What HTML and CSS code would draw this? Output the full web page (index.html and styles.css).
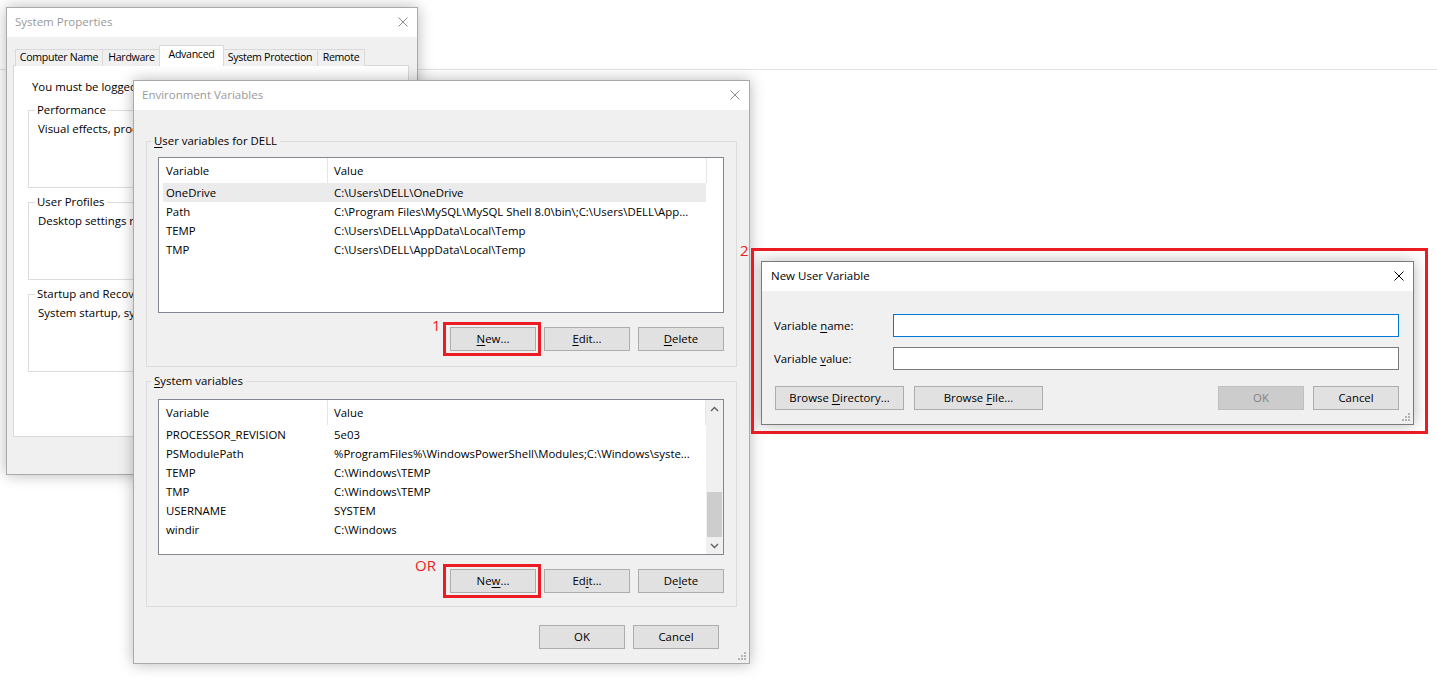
FILE: index.html
```html
<!DOCTYPE html>
<html lang="en">
<head>
    <meta charset="UTF-8">
    <title>Environment Variables</title>
    <link rel="stylesheet" href="styles.css">
</head>
<body>

<div class="desk">
    <div class="rule"></div>

    <!-- System Properties (behind) -->
    <div class="win floating sysprops">
        <div class="titlebar">
            <span class="title">System Properties</span>
            <svg class="x" width="10" height="10" viewBox="0 0 10 10"><path d="M0.5 0.5L9.5 9.5M9.5 0.5L0.5 9.5" stroke="currentColor" stroke-width="1"/></svg>
        </div>
        <div class="sp-body">
            <div class="tabs">
                <span class="tab t-name">Computer Name</span>
                <span class="tab t-hw">Hardware</span>
                <span class="tab t-adv active">Advanced</span>
                <span class="tab t-prot">System Protection</span>
                <span class="tab t-rem">Remote</span>
            </div>
            <div class="tabpanel">
                <p class="note">You must be logged on as an Administrator to make most of these changes.</p>
                <fieldset class="sp-group">
                    <legend>Performance</legend>
                    <p>Visual effects, processor scheduling, memory usage, and virtual memory</p>
                </fieldset>
                <fieldset class="sp-group">
                    <legend>User Profiles</legend>
                    <p>Desktop settings related to your sign-in</p>
                </fieldset>
                <fieldset class="sp-group">
                    <legend>Startup and Recovery</legend>
                    <p>System startup, system failure, and debugging information</p>
                </fieldset>
            </div>
        </div>
    </div>

    <!-- Environment Variables -->
    <div class="win floating envvars">
        <div class="titlebar">
            <span class="title">Environment Variables</span>
            <svg class="x" width="10" height="10" viewBox="0 0 10 10"><path d="M0.5 0.5L9.5 9.5M9.5 0.5L0.5 9.5" stroke="currentColor" stroke-width="1"/></svg>
        </div>
        <div class="env-body">
            <fieldset class="group g-user">
                <legend><u>U</u>ser variables for DELL</legend>
                <div class="listview">
                    <div class="lv-main">
                        <div class="lv-head"><span class="c1">Variable</span><span class="c2">Value</span></div>
                        <div class="lv-row sel"><span class="c1">OneDrive</span><span class="c2">C:\Users\DELL\OneDrive</span></div>
                        <div class="lv-row"><span class="c1">Path</span><span class="c2">C:\Program Files\MySQL\MySQL Shell 8.0\bin\;C:\Users\DELL\App...</span></div>
                        <div class="lv-row"><span class="c1">TEMP</span><span class="c2">C:\Users\DELL\AppData\Local\Temp</span></div>
                        <div class="lv-row"><span class="c1">TMP</span><span class="c2">C:\Users\DELL\AppData\Local\Temp</span></div>
                    </div>
                </div>
                <div class="btnrow">
                    <span class="callbtn">
                        <span class="mark m-one">1</span>
                        <button class="btn"><u>N</u>ew...</button>
                    </span>
                    <button class="btn"><u>E</u>dit...</button>
                    <button class="btn"><u>D</u>elete</button>
                </div>
            </fieldset>

            <fieldset class="group g-sys">
                <legend><u>S</u>ystem variables</legend>
                <div class="listview">
                    <div class="lv-main">
                        <div class="lv-head"><span class="c1">Variable</span><span class="c2">Value</span></div>
                        <div class="lv-row"><span class="c1">PROCESSOR_REVISION</span><span class="c2">5e03</span></div>
                        <div class="lv-row"><span class="c1">PSModulePath</span><span class="c2">%ProgramFiles%\WindowsPowerShell\Modules;C:\Windows\syste...</span></div>
                        <div class="lv-row"><span class="c1">TEMP</span><span class="c2">C:\Windows\TEMP</span></div>
                        <div class="lv-row"><span class="c1">TMP</span><span class="c2">C:\Windows\TEMP</span></div>
                        <div class="lv-row"><span class="c1">USERNAME</span><span class="c2">SYSTEM</span></div>
                        <div class="lv-row"><span class="c1">windir</span><span class="c2">C:\Windows</span></div>
                    </div>
                    <div class="lv-scroll">
                        <span class="sb-arrow"><svg width="9" height="6" viewBox="0 0 9 6"><path d="M1 5L4.5 1.5L8 5" fill="none" stroke="#606060" stroke-width="1.4"/></svg></span>
                        <span class="sb-track"><span class="sb-thumb"></span></span>
                        <span class="sb-arrow"><svg width="9" height="6" viewBox="0 0 9 6"><path d="M1 1L4.5 4.5L8 1" fill="none" stroke="#606060" stroke-width="1.4"/></svg></span>
                    </div>
                </div>
                <div class="btnrow">
                    <span class="callbtn">
                        <span class="mark m-or">OR</span>
                        <button class="btn">Ne<u>w</u>...</button>
                    </span>
                    <button class="btn">Ed<u>i</u>t...</button>
                    <button class="btn">De<u>l</u>ete</button>
                </div>
            </fieldset>

            <div class="dlg-actions">
                <button class="btn">OK</button>
                <button class="btn">Cancel</button>
            </div>
        </div>
        <svg class="grip" width="8" height="8" viewBox="0 0 8 8"><g fill="#b4b4b4"><rect x="6" y="0" width="2" height="2"/><rect x="3" y="3" width="2" height="2"/><rect x="6" y="3" width="2" height="2"/><rect x="0" y="6" width="2" height="2"/><rect x="3" y="6" width="2" height="2"/><rect x="6" y="6" width="2" height="2"/></g></svg>
    </div>

    <!-- New User Variable, framed in red -->
    <div class="callout">
        <span class="mark m-two">2</span>
        <div class="win newvar">
            <div class="titlebar">
                <span class="title">New User Variable</span>
                <svg class="x" width="10" height="10" viewBox="0 0 10 10"><path d="M0.5 0.5L9.5 9.5M9.5 0.5L0.5 9.5" stroke="currentColor" stroke-width="1"/></svg>
            </div>
            <div class="nv-body">
                <div class="nv-field">
                    <label for="varName">Variable <u>n</u>ame:</label>
                    <input type="text" id="varName" class="nv-input focus">
                </div>
                <div class="nv-field">
                    <label for="varValue">Variable <u>v</u>alue:</label>
                    <input type="text" id="varValue" class="nv-input">
                </div>
                <div class="nv-buttons">
                    <button class="btn wide">Browse <u>D</u>irectory...</button>
                    <button class="btn wide">Browse <u>F</u>ile...</button>
                    <span class="spacer"></span>
                    <button class="btn" disabled>OK</button>
                    <button class="btn">Cancel</button>
                </div>
            </div>
            <svg class="grip" width="8" height="8" viewBox="0 0 8 8"><g fill="#b4b4b4"><rect x="6" y="0" width="2" height="2"/><rect x="3" y="3" width="2" height="2"/><rect x="6" y="3" width="2" height="2"/><rect x="0" y="6" width="2" height="2"/><rect x="3" y="6" width="2" height="2"/><rect x="6" y="6" width="2" height="2"/></g></svg>
        </div>
    </div>
</div>

</body>
</html>
```

FILE: styles.css
```css
* {
    box-sizing: border-box;
}
body {
    margin: 0;
    background-color: #fff;
    font-family: "Segoe UI", "Open Sans", sans-serif;
    font-size: 11.4px;
    line-height: 16px;
    color: #000;
}
p {
    margin: 0;
}
u {
    text-decoration-thickness: 1px;
    text-underline-offset: 2px;
}
.desk {
    position: relative;
    width: 1437px;
    height: 680px;
    overflow: hidden;
}
.rule {
    margin-top: 69px;
    border-top: 1px solid #e3e3e3;
}

/* windows */
.win {
    position: relative;
    background-color: #f0f0f0;
    border: 1px solid #aaa;
    box-shadow: 0 0 14px rgba(0, 0, 0, 0.28);
    display: flex;
    flex-direction: column;
    overflow: hidden;
    white-space: nowrap;
}
.floating {
    position: absolute;
}
.sysprops {
    left: 6px;
    top: 7px;
    width: 412px;
    height: 468px;
}
.envvars {
    left: 133px;
    top: 80px;
    width: 617px;
    height: 584px;
}
.titlebar {
    flex: none;
    height: 29px;
    background-color: #fff;
    display: flex;
    align-items: center;
    justify-content: space-between;
    padding: 0 9px 1px 8px;
    color: #999;
    font-size: 11.5px;
}
.titlebar .x {
    color: #8c8c8c;
}
.grip {
    position: absolute;
    right: 3px;
    bottom: 3px;
}

/* system properties */
.sp-body {
    padding: 8px 8px 0 6px;
}
.tabs {
    display: flex;
    align-items: flex-end;
    height: 20px;
    padding-left: 2px;
}
.tab {
    position: relative;
    height: 17px;
    margin-left: -1px;
    margin-bottom: -1px;
    border: 1px solid #d9d9d9;
    border-bottom: none;
    background-color: #f0f0f0;
    text-align: center;
    font-size: 10.6px;
    letter-spacing: -0.3px;
    line-height: 15px;
}
.tab:first-child {
    margin-left: 0;
}
.t-name { width: 88px; }
.t-hw { width: 59px; }
.t-adv { width: 65px; }
.t-prot { width: 96px; }
.t-rem { width: 48px; }
.tab.active {
    z-index: 1;
    height: 21px;
    margin-left: -2px;
    margin-right: -1px;
    background-color: #fff;
    line-height: 17px;
}
.tabpanel {
    height: 372px;
    background-color: #fff;
    border: 1px solid #d9d9d9;
    padding: 13px 14px 0 14px;
}
.note {
    margin-left: 4px;
}
.sp-group {
    height: 86px;
    margin: 7px 0 0 0;
    padding: 3px 9px 0 9px;
    border: 1px solid #dcdcdc;
    min-width: 0;
}
.sp-group + .sp-group {
    margin-top: 6px;
}
.sp-group legend {
    margin-left: -3px;
    padding: 0 2px;
}

/* environment variables */
.env-body {
    flex: 1;
    display: flex;
    flex-direction: column;
}
.group {
    margin: 0 12px 0 12px;
    padding: 8px 12px 15px 11px;
    border: 1px solid #dcdcdc;
    min-width: 0;
}
.group legend {
    margin-left: -7px;
    padding: 0 3px;
}
.g-user {
    margin-top: 23px;
}
.g-sys {
    margin-top: 6px;
    padding-top: 10px;
    padding-bottom: 13px;
}
.listview {
    display: flex;
    height: 156px;
    background-color: #fff;
    border: 1px solid #828790;
}
.lv-main {
    width: 548px;
}
.lv-head {
    display: flex;
    height: 25px;
    border-right: 1px solid #e5e5e5;
}
.lv-head span {
    display: flex;
    align-items: center;
}
.lv-head .c1 {
    width: 169px;
    padding-left: 7px;
    border-right: 1px solid #e5e5e5;
}
.lv-head .c2 {
    padding-left: 6px;
}
.lv-row {
    display: flex;
    align-items: center;
    height: 19px;
    margin-left: 4px;
    width: 543px;
}
.lv-row.sel {
    background-color: #ebebeb;
}
.lv-row .c1 {
    width: 164px;
    padding-left: 3px;
}
.lv-row .c2 {
    flex: 1;
    padding-left: 7px;
    overflow: hidden;
}
.lv-scroll {
    width: 17px;
    display: flex;
    flex-direction: column;
    background-color: #f0f0f0;
}
.sb-arrow {
    height: 17px;
    display: flex;
    align-items: center;
    justify-content: center;
}
.sb-track {
    flex: 1;
    display: flex;
    flex-direction: column;
    justify-content: flex-end;
}
.sb-thumb {
    height: 45px;
    margin: 0 1px;
    background-color: #cdcdcd;
}
.btnrow {
    display: flex;
    justify-content: flex-end;
    gap: 8px;
    margin-top: 14px;
}
.btn {
    width: 86px;
    height: 24px;
    padding: 0;
    background-color: #e1e1e1;
    border: 1px solid #adadad;
    font: inherit;
    color: #000;
}
.btn:disabled {
    background-color: #ccc;
    border-color: #bfbfbf;
    color: #838383;
}
.btn.wide {
    width: 129px;
}
.dlg-actions {
    display: flex;
    justify-content: flex-end;
    gap: 8px;
    margin-top: 18px;
    padding-right: 30px;
}

/* red annotations */
.callbtn {
    position: relative;
    display: flex;
}
.callbtn::after {
    content: "";
    position: absolute;
    left: -7px;
    right: -5px;
    top: -5px;
    bottom: -5px;
    border: 3px solid #ed1c24;
}
.mark {
    position: absolute;
    color: #ed1c24;
    font-size: 15px;
    line-height: 18px;
}
.m-one {
    left: -18px;
    top: -11px;
}
.m-or {
    left: -35px;
    top: -13px;
}
.m-two {
    left: -14px;
    top: -10px;
}
.callout {
    position: absolute;
    left: 751px;
    top: 248px;
    width: 677px;
    height: 186px;
    border: 3px solid #ed1c24;
    padding: 10px 0 0 7px;
}

/* new user variable */
.newvar {
    width: 653px;
    height: 164px;
    border-color: #7a7a7a;
}
.newvar .titlebar {
    color: #000;
    padding-left: 9px;
}
.newvar .titlebar .x {
    color: #000;
}
.nv-body {
    padding: 23px 14px 14px 12px;
}
.nv-field {
    display: flex;
    align-items: center;
    margin-bottom: 10px;
}
.nv-field label {
    width: 119px;
}
.nv-input {
    flex: 1;
    height: 23px;
    border: 1px solid #7a7a7a;
    background-color: #fff;
    font: inherit;
    outline: none;
}
.nv-input.focus {
    border-color: #0078d7;
}
.nv-buttons {
    display: flex;
    gap: 10px;
    margin-top: 16px;
    padding-left: 1px;
}
.nv-buttons .spacer {
    flex: 1;
}
.nv-buttons .btn:last-child {
    margin-left: -1px;
}
```
